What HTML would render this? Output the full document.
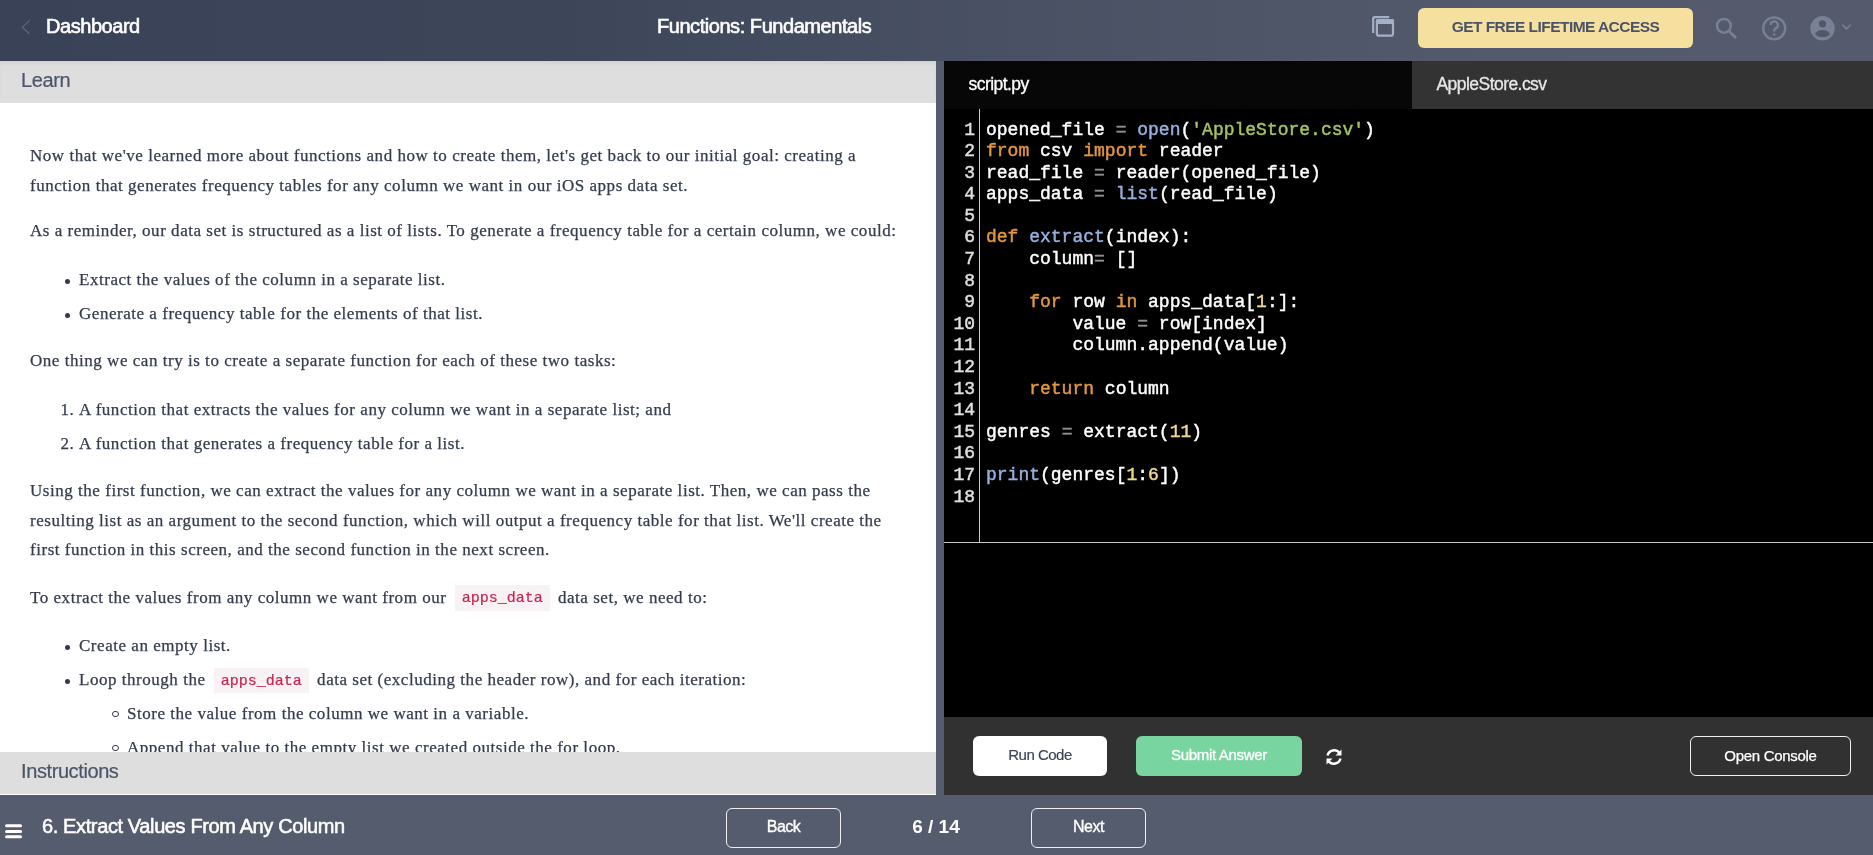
<!DOCTYPE html>
<html><head><meta charset="utf-8">
<style>
*{box-sizing:border-box;margin:0;padding:0}
html,body{width:1873px;height:855px;overflow:hidden;background:#555c6d;font-family:"Liberation Sans",sans-serif}
.abs{position:absolute}
#hdr,#left,#right,#foot{will-change:transform}
#hdr{position:absolute;left:0;top:0;width:1873px;height:61px;background:linear-gradient(to right,#394257 0%,#3d4659 30%,#4a5164 55%,#535a6b 80%,#555b6c 100%)}
#hdr .t{position:absolute;color:#fff;white-space:nowrap}
#left{position:absolute;left:0;top:61px;width:936px;height:734px;background:#fff;overflow:hidden}
.ph{position:absolute;left:0;width:936px;height:42px;background:#dedede;color:#4b5569;font-size:20px;letter-spacing:-0.4px;-webkit-text-stroke:0.2px #4b5569}
.ph:first-child{box-shadow:inset 0 4px 4px -2px rgba(0,0,0,0.07)}
.ph span{position:absolute;left:21px;top:8px}
#content{position:absolute;left:0;top:42px;width:936px;height:649px;overflow:hidden;padding:37.9px 30px 0 30px;font-family:"Liberation Serif",serif;font-size:17px;letter-spacing:0.53px;color:#333b4c;line-height:29.75px;-webkit-text-stroke:0.25px #333b4c}
#content p{margin:0 0 16px 0}
#content ul,#content ol{margin:0 0 16px 0;padding-left:49px}
#content li{line-height:34px;position:relative}
#content ul{list-style:none}
#content>ul:first-of-type>li,#content>ol>li{top:0.8px}
#content>ul:first-of-type>li::before{margin-top:-0.8px}
#content ul>li::before{content:"";position:absolute;left:-14.1px;top:16.5px;width:5.1px;height:5.1px;border-radius:50%;background:#333b4c}
#content ul ul>li::before{left:-14.9px;top:14px;width:6.6px;height:6.6px;box-sizing:border-box;border:1.1px solid #333b4c;background:none}
#content ul ul{margin:0;padding-left:48px}
code{font-family:"Liberation Mono",monospace;font-size:15px;line-height:0;letter-spacing:0;color:#c7254e;background:#f9f2f4;padding:5.3px 7px 3.5px;margin:0 3.5px;-webkit-text-stroke:0.2px #c7254e}
#div{position:absolute;left:936px;top:61px;width:8px;height:734px;background:#555c6e}
#right{position:absolute;left:944px;top:61px;width:929px;height:734px;background:#000}
#tabs{position:absolute;left:0;top:0;width:929px;height:47.5px}
.tab{position:absolute;top:0;height:47.5px;color:#fff;font-size:17.5px;letter-spacing:-0.55px;-webkit-text-stroke:0.3px #fff}
#ed{position:absolute;left:0;top:47.5px;width:929px;height:434px;background:#000;border-bottom:1px solid #c8c8c8}
#gut{position:absolute;left:0;top:0;width:36px;height:433px;border-right:1px solid #c8c8c8}
pre{font-family:"Liberation Mono",monospace;font-size:18px;line-height:21.6px;color:#fff;-webkit-text-stroke-width:0.45px}
#ln{position:absolute;right:4px;top:11px;text-align:right;color:#e0e0e0}
#code{position:absolute;left:42px;top:11px}
.k{color:#e5973b}.b{color:#96b1de}.s{color:#a6c35f}.n{color:#f1d98f}.o{color:#8f8f8f}
#bar{position:absolute;left:0;top:656px;width:929px;height:78px;background:#313131}
.btn{position:absolute;height:40px;border-radius:6px;font-size:15px;text-align:center;line-height:40px;white-space:nowrap}
#foot{position:absolute;left:0;top:795px;width:1873px;height:60px;background:#555c6d}
</style></head><body>
<div id="hdr">
  <svg class="abs" style="left:20px;top:19px" width="12" height="16" viewBox="0 0 12 16"><path d="M9.6 1.3 L2.4 8.2 L9.6 15" fill="none" stroke="#626879" stroke-width="1.1"/></svg>
  <div class="t" style="left:46px;top:15px;font-size:20px;letter-spacing:-0.45px;-webkit-text-stroke:0.6px #fff">Dashboard</div>
  <div class="t" style="left:657px;top:15px;font-size:20px;letter-spacing:-0.45px;-webkit-text-stroke:0.6px #fff">Functions: Fundamentals</div>
  <svg class="abs" style="left:1370px;top:14px" width="28" height="26" viewBox="0 0 28 26"><path d="M3.2 18.9 V4.6 a1.5 1.5 0 0 1 1.5-1.5 H19.2" fill="none" stroke="#a3b0c7" stroke-width="2.2"/><rect x="6.9" y="6" width="16.1" height="15.7" rx="2" fill="none" stroke="#a3b0c7" stroke-width="2.2"/><rect x="5.8" y="4.9" width="18.3" height="5" rx="2" fill="#a3b0c7"/></svg>
  <div class="abs" style="left:1418px;top:8px;width:275px;height:40px;border-radius:6px;background:#f5e09f;color:#4a5267;font-weight:bold;font-size:15.5px;text-align:center;line-height:37.5px;letter-spacing:-0.55px">GET FREE LIFETIME ACCESS</div>
  <svg class="abs" style="left:1712px;top:14px" width="28" height="28" viewBox="0 0 28 28"><circle cx="11.9" cy="11.8" r="6.9" fill="none" stroke="#788196" stroke-width="2.5"/><path d="M16.9 16.9 L23.3 23.3" stroke="#788196" stroke-width="2.8" stroke-linecap="round"/></svg>
  <svg class="abs" style="left:1760px;top:14px" width="28" height="28" viewBox="0 0 28 28"><circle cx="14.2" cy="14.3" r="11" fill="none" stroke="#788196" stroke-width="2.3"/><path d="M10.5 11 a3.7 3.7 0 1 1 5.2 3.4 c-1 .5 -1.5 1.2 -1.5 2.3 v0.9" fill="none" stroke="#788196" stroke-width="2.3"/><circle cx="14.2" cy="20.6" r="1.3" fill="#788196"/></svg>
  <svg class="abs" style="left:1808px;top:14px" width="48" height="28" viewBox="0 0 48 28"><circle cx="14.5" cy="14.3" r="12.2" fill="#788196"/><circle cx="14.5" cy="9.8" r="3.6" fill="#50576a"/><path d="M7 20.3 c1.5-3 4-4.3 7.5-4.3 s6 1.3 7.5 4.3 c-2 2 -4.5 3 -7.5 3 s-5.5-1-7.5-3z" fill="#50576a"/><path d="M34.3 10.7 L38.5 14.9 L42.7 10.7" fill="none" stroke="#788196" stroke-width="1.6"/></svg>
</div>

<div id="left">
  <div class="ph" style="top:0"><span>Learn</span></div>
  <div id="content">
    <p>Now that we've learned more about functions and how to create them, let's get back to our initial goal: creating a function that generates frequency tables for any column we want in our iOS apps data set.</p>
    <p>As a reminder, our data set is structured as a list of lists. To generate a frequency table for a certain column, we could:</p>
    <ul><li>Extract the values of the column in a separate list.</li><li>Generate a frequency table for the elements of that list.</li></ul>
    <p>One thing we can try is to create a separate function for each of these two tasks:</p>
    <ol><li>A function that extracts the values for any column we want in a separate list; and</li><li>A function that generates a frequency table for a list.</li></ol>
    <p>Using the first function, we can extract the values for any column we want in a separate list. Then, we can pass the resulting list as an argument to the second function, which will output a frequency table for that list. We'll create the first function in this screen, and the second function in the next screen.</p>
    <p style="margin-top:17.4px;margin-bottom:16.6px">To extract the values from any column we want from our <code>apps_data</code> data set, we need to:</p>
    <ul><li>Create an empty list.</li><li>Loop through the <code>apps_data</code> data set (excluding the header row), and for each iteration:
      <ul><li>Store the value from the column we want in a variable.</li><li>Append that value to the empty list we created outside the for loop.</li></ul></li></ul>
  </div>
  <div class="ph" style="top:691px;height:42px"><span>Instructions</span></div>
</div>
<div id="div"></div>

<div id="right">
  <div id="tabs">
    <div class="tab" style="left:0;width:468px;background:#070707"><span class="abs" style="left:24.5px;top:13.2px">script.py</span></div>
    <div class="tab" style="left:468px;width:461px;background:#333"><span class="abs" style="left:24.5px;top:13.2px;color:#e8e8e8;-webkit-text-stroke:0.3px #e8e8e8">AppleStore.csv</span></div>
  </div>
  <div id="ed">
    <div id="gut"><pre id="ln">1
2
3
4
5
6
7
8
9
10
11
12
13
14
15
16
17
18</pre></div>
    <pre id="code">opened_file <span class="o">=</span> <span class="b">open</span>(<span class="s">'AppleStore.csv'</span>)
<span class="k">from</span> csv <span class="k">import</span> reader
read_file <span class="o">=</span> reader(opened_file)
apps_data <span class="o">=</span> <span class="b">list</span>(read_file)

<span class="k">def</span> <span class="b">extract</span>(index):
    column<span class="o">=</span> []

    <span class="k">for</span> row <span class="k">in</span> apps_data[<span class="n">1</span>:]:
        value <span class="o">=</span> row[index]
        column.append(value)

    <span class="k">return</span> column

genres <span class="o">=</span> extract(<span class="n">11</span>)

<span class="b">print</span>(genres[<span class="n">1</span>:<span class="n">6</span>])
</pre>
  </div>
  <div id="bar">
    <div class="btn" style="left:29px;top:19px;width:134px;background:#fff;color:#3a4256;letter-spacing:-0.5px;line-height:37.6px;-webkit-text-stroke:0.15px #3a4256">Run Code</div>
    <div class="btn" style="left:192px;top:19px;width:166px;background:#78d5a0;color:#fff;letter-spacing:-0.3px;line-height:37.6px;-webkit-text-stroke:0.3px #fff">Submit Answer</div>
    <svg class="abs" style="left:380px;top:29.5px" width="20" height="20" viewBox="0 0 20 20"><path d="M3.5 8.5 A6.8 6.8 0 0 1 15.5 6" fill="none" stroke="#fff" stroke-width="2.4"/><path d="M17.5 2.5 V8.5 H11.5z" fill="#fff"/><path d="M16.5 11.5 A6.8 6.8 0 0 1 4.5 14" fill="none" stroke="#fff" stroke-width="2.4"/><path d="M2.5 17.5 V11.5 H8.5z" fill="#fff"/></svg>
    <div class="btn" style="left:746px;top:19px;width:161px;border:1px solid #f0f0f0;color:#fff;line-height:37px;letter-spacing:-0.3px;-webkit-text-stroke:0.25px #fff">Open Console</div>
  </div>
</div>

<div id="foot">
  <svg class="abs" style="left:5px;top:27px" width="18" height="18" viewBox="0 0 18 18"><rect x="0.05" y="2.3" width="17" height="3" rx="1.5" fill="#fff"/><rect x="0.05" y="7.9" width="17" height="3" rx="1.5" fill="#fff"/><rect x="0.05" y="13.3" width="17" height="3" rx="1.5" fill="#fff"/></svg>
  <div class="abs" style="left:42px;top:19.7px;color:#fff;font-size:20px;letter-spacing:-0.38px;-webkit-text-stroke:0.55px #fff;white-space:nowrap">6. Extract Values From Any Column</div>
  <div class="btn" style="left:726px;top:13px;width:115px;border:1px solid #f0f0f0;color:#fff;font-size:16px;letter-spacing:-0.5px;-webkit-text-stroke:0.35px #fff;line-height:36.5px">Back</div>
  <div class="abs" style="left:900px;top:21px;width:72px;text-align:center;color:#fff;font-size:19px;font-weight:bold">6 / 14</div>
  <div class="btn" style="left:1031px;top:13px;width:115px;border:1px solid #f0f0f0;color:#fff;font-size:16px;letter-spacing:-0.5px;-webkit-text-stroke:0.35px #fff;line-height:36.5px">Next</div>
</div>
</body></html>
